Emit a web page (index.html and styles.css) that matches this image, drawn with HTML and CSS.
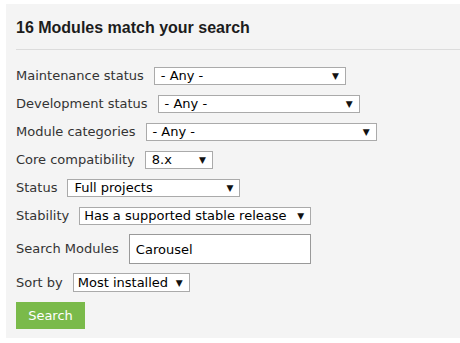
FILE: index.html
```html
<!DOCTYPE html>
<html lang="en">
<head>
  <meta charset="UTF-8">
  <title>Module search</title>
  <link rel="stylesheet" href="styles.css">
</head>
<body>
  <div class="panel">
    <h2 class="panel-title">16 Modules match your search</h2>
    <form class="search-form">
      <div class="form-row">
        <label>Maintenance status</label>
        <span class="select w-maint"><span>- Any -</span><span class="arrow">▼</span></span>
      </div>
      <div class="form-row">
        <label>Development status</label>
        <span class="select w-dev"><span>- Any -</span><span class="arrow">▼</span></span>
      </div>
      <div class="form-row">
        <label>Module categories</label>
        <span class="select w-cat"><span>- Any -</span><span class="arrow">▼</span></span>
      </div>
      <div class="form-row">
        <label>Core compatibility</label>
        <span class="select w-core"><span>8.x</span><span class="arrow">▼</span></span>
      </div>
      <div class="form-row">
        <label>Status</label>
        <span class="select w-status"><span>Full projects</span><span class="arrow">▼</span></span>
      </div>
      <div class="form-row">
        <label>Stability</label>
        <span class="select w-stab"><span>Has a supported stable release</span><span class="arrow">▼</span></span>
      </div>
      <div class="form-row row-text">
        <label>Search Modules</label>
        <input class="text-input" type="text" value="Carousel">
      </div>
      <div class="form-row">
        <label>Sort by</label>
        <span class="select w-sort"><span>Most installed</span><span class="arrow">▼</span></span>
      </div>
      <button class="search-button" type="button">Search</button>
    </form>
  </div>
</body>
</html>
```

FILE: styles.css
```css
body {
  margin: 0;
  padding: 4px 0 0 6px;
  background: #fff;
  font-family: "DejaVu Sans", Verdana, sans-serif;
  overflow: hidden;
}

.panel {
  background: #f4f4f4;
  padding: 15px 0 10px 10px;
  height: 309px;
  box-sizing: border-box;
  height: 334px;
}

.panel-title {
  margin: 0;
  padding-bottom: 12px;
  border-bottom: 1px solid #dcdcdc;
  font-family: "Liberation Sans", Arial, sans-serif;
  font-size: 16px;
  line-height: 18px;
  font-weight: 700;
  color: #1c1c1c;
}

.search-form {
  padding-top: 17px;
}

.form-row {
  display: flex;
  align-items: center;
  gap: 10px;
  margin-bottom: 10px;
  font-size: 13px;
  color: #333;
}

.form-row.row-text {
  margin-top: -1px;
  margin-bottom: 9px;
}

.form-row label {
  line-height: 16px;
}

.select {
  display: flex;
  justify-content: space-between;
  align-items: center;
  box-sizing: border-box;
  height: 18px;
  padding: 0 6px 0 6px;
  background: #fff;
  border: 1px solid #aaa;
  color: #000;
  line-height: 16px;
  white-space: nowrap;
}

.select .arrow {
  font-size: 9px;
  color: #111;
  padding-left: 6px;
}

.w-maint { width: 192px; }
.w-dev { width: 202px; }
.w-cat { width: 231px; }
.w-core { width: 68px; }
.w-status { width: 173px; }
.w-stab { width: 232px; padding-left: 4px; }
.w-sort { width: 117px; height: 19px; padding-left: 4px; }

.text-input {
  box-sizing: border-box;
  width: 182px;
  height: 30px;
  padding: 0 6px;
  border: 1px solid #999;
  background: #fff;
  font-family: "DejaVu Sans", Verdana, sans-serif;
  font-size: 13px;
  color: #000;
  outline: none;
}

.search-button {
  display: block;
  width: 69px;
  height: 27px;
  padding: 0;
  border: none;
  background: #7aba4a;
  color: #fff;
  font-family: "DejaVu Sans", Verdana, sans-serif;
  font-size: 13px;
  cursor: pointer;
}
```
